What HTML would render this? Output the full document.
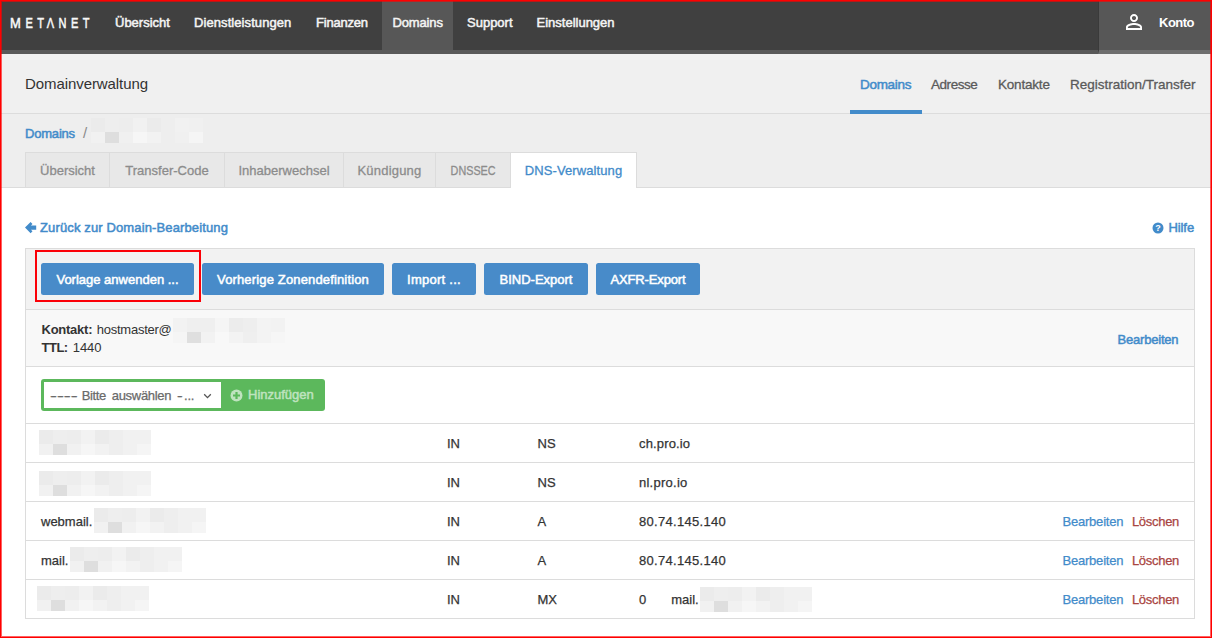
<!DOCTYPE html>
<html lang="de">
<head>
<meta charset="utf-8">
<title>Domainverwaltung - DNS-Verwaltung</title>
<style>
*{box-sizing:border-box;margin:0;padding:0}
html,body{width:1212px;height:638px;overflow:hidden;background:#fff}
body{position:relative;font-family:"Liberation Sans",Arial,sans-serif;font-size:13px;color:#333;line-height:16px}
a{text-decoration:none;color:#428bca}
.abs{position:absolute;white-space:nowrap}
.m{-webkit-text-stroke:0.5px currentColor}
/* screenshot frame */
#frame{position:absolute;left:0;top:0;width:1212px;height:638px;border:1px solid #ff0000;box-shadow:inset 0 0 0 1px rgba(255,0,0,.62);z-index:50;pointer-events:none}
/* top bar */
#topbar{position:absolute;left:0;top:0;width:1212px;height:54px;background:#404040;border-bottom:4px solid #595959}
#topbar a{position:absolute;top:0;height:50px;line-height:45px;color:#f4f4f4;white-space:nowrap}
#topbar a.active{background:#575757}
#topbar a#logo{left:10px;top:1px;font-size:14.5px;letter-spacing:5.9px;transform:scaleX(.76);transform-origin:0 50%;-webkit-text-stroke:0.5px #fff}
#account{position:absolute;left:1098px;top:0;width:114px;height:54px;background:#575757;border-bottom:4px solid #6e6e6e;border-left:1px solid #3a3a3a}
#account svg{position:absolute;left:23px;top:10px}
#account span{position:absolute;left:60px;top:15px;color:#fff;font-weight:bold;letter-spacing:-.5px}
/* sub header */
#subhead{position:absolute;left:0;top:54px;width:1212px;height:60px;background:#f0f0f0;border-bottom:1px solid #dcdcdc}
#subhead h1{position:absolute;left:25px;top:21px;font-size:15px;font-weight:normal;color:#333;line-height:18px;white-space:nowrap;letter-spacing:-.08px}
#subnav a{position:absolute;top:23px;font-size:13.5px;color:#5a5a5a;white-space:nowrap;-webkit-text-stroke:0.3px currentColor}
#subnav a.active{color:#428bca;-webkit-text-stroke:0.5px currentColor}
#subnav i{position:absolute;left:850px;top:56px;width:72px;height:4px;background:#428bca}
/* crumbs + tabs */
#crumbs{position:absolute;left:0;top:114px;width:1212px;height:74px;background:#eeeeee;border-bottom:1px solid #dcdcdc}
#crumbs .bc{position:absolute;left:25px;top:12px;white-space:nowrap}
#tabs{position:absolute;left:25px;top:38px;height:36px;list-style:none;display:flex;align-items:flex-start;border-left:1px solid #dcdcdc;border-top:1px solid #dcdcdc}
#tabs li{height:34px;line-height:36px;background:#e8e8e8;border-right:1px solid #dcdcdc;color:#8c8c8c;-webkit-text-stroke:0.3px currentColor;text-align:center;white-space:nowrap;overflow:hidden}
#tabs li.active{background:#fff;color:#428bca;position:relative;overflow:visible}
#tabs li.active::after{content:'';position:absolute;left:0;right:0;bottom:-1px;height:1px;background:#fff}
/* pixelated (redacted) areas */
.mz{position:absolute;z-index:6;display:grid;grid-template-columns:repeat(8,14px);grid-template-rows:14px 11px}
.mz b{display:block}
.mz b:nth-child(1){background:#ebebeb}.mz b:nth-child(2){background:#eee}.mz b:nth-child(3){background:#ededed}.mz b:nth-child(4){background:#f2f2f2}
.mz b:nth-child(5){background:#ebebeb}.mz b:nth-child(6){background:#eee}.mz b:nth-child(7){background:#f1f1f1}.mz b:nth-child(8){background:#f1f1f1}
.mz b:nth-child(9){background:#f1f1f1}.mz b:nth-child(10){background:#dedede}.mz b:nth-child(11){background:#f1f1f1}.mz b:nth-child(12){background:#f6f6f6}
.mz b:nth-child(13){background:#f2f2f2}.mz b:nth-child(14){background:#eee}.mz b:nth-child(15){background:#f1f1f1}.mz b:nth-child(16){background:#f5f5f5}
.mz.g b:nth-child(4){background:#f1f1f1}.mz.g b:nth-child(8){background:#f0f0f0}.mz.g b:nth-child(11){background:#f0f0f0}.mz.g b:nth-child(15){background:#f0f0f0}
.mz.f b:nth-child(1){background:#f2f2f2}.mz.f b:nth-child(2){background:#efefef}.mz.f b:nth-child(3){background:#efefef}.mz.f b:nth-child(4){background:#f5f5f5}
.mz.f b:nth-child(5){background:#ececec}.mz.f b:nth-child(7){background:#f3f3f3}.mz.f b:nth-child(8){background:#f2f2f2}
.mz.f b:nth-child(9){background:#f5f5f5}.mz.f b:nth-child(10){background:#dfdfdf}.mz.f b:nth-child(11){background:#f2f2f2}.mz.f b:nth-child(12){background:#f8f8f8}
.mz.f b:nth-child(13){background:#f3f3f3}.mz.f b:nth-child(14){background:#efefef}.mz.f b:nth-child(15){background:#f3f3f3}.mz.f b:nth-child(16){background:#f6f6f6}
/* content */
#back{left:40px;top:220px;letter-spacing:.13px}
#back svg{position:absolute;left:-15.2px;top:1.5px}
#help{left:1168.5px;top:220px;letter-spacing:-.1px}
#help svg{position:absolute;left:-16.2px;top:1.5px}
#panel{position:absolute;left:25px;top:248px;width:1170px;height:371px;border:1px solid #dcdcdc;background:#fff}
#toolbar{position:absolute;left:0;top:0;width:1168px;height:61px;background:#f2f2f2;border-bottom:1px solid #dcdcdc}
.btn{position:absolute;top:14px;height:32px;line-height:33px;background:#488bc9;color:#fff;border-radius:2.5px;text-align:center;white-space:nowrap}
#hl{position:absolute;left:35px;top:250px;width:166px;height:52px;border:2px solid #fb0007;z-index:5}
#meta{position:absolute;left:0;top:61px;width:1168px;height:57px;background:#f8f8f8;border-bottom:1px solid #dcdcdc}
#addrow{position:absolute;left:0;top:118px;width:1168px;height:57px;background:#fff;border-bottom:1px solid #dcdcdc}
#addgrp{position:absolute;left:15px;top:12px;width:284px;height:32px;background:#5cb85c;border-radius:3px}
#sel{position:absolute;left:3px;top:3px;width:177px;height:26px;background:#fff;color:#6a6a6a}
#sel svg{position:absolute;left:159px;top:11px}
#addbtn{left:207px;top:8px;color:#bfe3bf}
#addbtn svg{position:absolute;left:-18px;top:2px}
#records{position:absolute;left:0;top:175px;width:1168px;border-collapse:separate;border-spacing:0;table-layout:fixed}
#records td{height:39px;padding-top:2px;-webkit-text-stroke:0.25px currentColor;border-bottom:1px solid #dcdcdc;vertical-align:middle;white-space:nowrap;color:#333}
#records tr:last-child td{border-bottom:0;height:38px}
#records td.act{text-align:right;padding-right:15px}
.del{color:#a94442;margin-left:5px}
</style>
</head>
<body>
<div id="topbar">
  <a id="logo" href="#"><span style="display:inline-block;transform:scaleX(1.18);transform-origin:0 50%;margin-right:2.4px">M</span>E<span style="margin-right:-2.4px">T</span>&Lambda;NET</a>
  <a class="m" href="#" style="left:115px">Übersicht</a>
  <a class="m" href="#" style="left:194px;letter-spacing:.08px">Dienstleistungen</a>
  <a class="m" href="#" style="left:316px;letter-spacing:-.2px">Finanzen</a>
  <a class="m active" href="#" style="left:382px;width:71px;padding-left:10.5px;letter-spacing:-.15px">Domains</a>
  <a class="m" href="#" style="left:467px">Support</a>
  <a class="m" href="#" style="left:536.5px">Einstellungen</a>
</div>
<div id="account">
  <svg width="24" height="24" viewBox="0 0 24 24"><path fill="#fff" d="M12 5.9c1.16 0 2.1.94 2.1 2.1s-.94 2.1-2.1 2.1S9.900 9.160 9.900 8s.94-2.1 2.1-2.1m0 9c2.970 0 6.100 1.460 6.100 2.100v1.100H5.900V17c0-.64 3.130-2.100 6.100-2.100M12 4C9.790 4 8 5.790 8 8s1.790 4 4 4 4-1.790 4-4-1.790-4-4-4zm0 9c-2.670 0-8 1.340-8 4v3h16v-3c0-2.660-5.330-4-8-4z"/></svg>
  <span>Konto</span>
</div>

<div id="subhead">
  <h1>Domainverwaltung</h1>
  <nav id="subnav">
    <a class="active m" href="#" style="left:860px;letter-spacing:-.3px">Domains</a>
    <a href="#" style="left:931px;letter-spacing:-.45px">Adresse</a>
    <a href="#" style="left:998px;letter-spacing:-.2px">Kontakte</a>
    <a href="#" style="left:1070px">Registration/Transfer</a>
    <i></i>
  </nav>
</div>

<div id="crumbs">
  <div class="bc"><a class="m" href="#" style="letter-spacing:-.2px">Domains</a><span style="color:#8a8a8a;margin-left:8px;font-size:15px;line-height:0">/</span></div>
  <ul id="tabs">
    <li style="width:84px">Übersicht</li>
    <li style="width:115px">Transfer-Code</li>
    <li style="width:119px">Inhaberwechsel</li>
    <li style="width:92px;letter-spacing:.2px">Kündigung</li>
    <li style="width:75px"><span style="display:inline-block;transform:scaleX(.83)">DNSSEC</span></li>
    <li class="active m" style="width:126px;letter-spacing:.1px">DNS-Verwaltung</li>
  </ul>
</div>
<div class="mz g" style="left:91px;top:118px"><b></b><b></b><b></b><b></b><b></b><b></b><b></b><b></b><b></b><b></b><b></b><b></b><b></b><b></b><b></b><b></b></div>

<a id="back" class="abs m" href="#"><svg width="12" height="12" viewBox="0 0 12 12"><path fill="#428bca" d="M0 5.600 5.600 0 7.500 1.900 5.900 3.500H11.200V7.700H5.900L7.500 9.300 5.600 11.200Z"/></svg>Zurück zur Domain-Bearbeitung</a>
<a id="help" class="abs m" href="#"><svg width="12" height="12" viewBox="0 0 12 12"><circle cx="6" cy="6" r="5.500" fill="#428bca"/><text x="6" y="9.200" text-anchor="middle" font-family="Liberation Sans, sans-serif" font-size="9" font-weight="bold" fill="#fff">?</text></svg>Hilfe</a>

<div id="hl"></div>
<div id="panel">
  <div id="toolbar">
    <a class="btn m" href="#" style="left:15px;width:153px">Vorlage anwenden ...</a>
    <a class="btn m" href="#" style="left:176px;width:182px;letter-spacing:.15px">Vorherige Zonendefinition</a>
    <a class="btn m" href="#" style="left:366px;width:84px;letter-spacing:.25px">Import ...</a>
    <a class="btn m" href="#" style="left:458px;width:104px">BIND-Export</a>
    <a class="btn m" href="#" style="left:570px;width:104px;letter-spacing:-.15px">AXFR-Export</a>
  </div>
  <div id="meta">
    <div class="abs" style="left:15.5px;top:12px"><strong style="letter-spacing:-.25px;margin-right:4.5px">Kontakt:</strong><span style="letter-spacing:-.24px">hostmaster@</span></div>
    <div class="abs" style="left:15.5px;top:30px"><strong style="letter-spacing:-.5px;margin-right:5px">TTL:</strong><span>1440</span></div>
    <a class="abs m" href="#" style="left:1091.5px;top:22px;letter-spacing:-.2px">Bearbeiten</a>
  </div>
  <div id="addrow">
    <div id="addgrp">
      <div id="sel"><span class="abs" style="left:6px;top:6px;-webkit-text-stroke:.25px currentColor"><span style="display:inline-block;transform:scaleX(1.6);transform-origin:0 50%">----</span><span style="letter-spacing:-.4px;margin-left:14.4px">Bitte</span><span style="letter-spacing:-.3px;margin-left:6px">auswählen</span><span style="margin-left:5.5px;display:inline-block;transform:scaleX(1.3);transform-origin:0 50%">-</span><span style="margin-left:3px;letter-spacing:-.2px">...</span></span><svg width="9" height="7" viewBox="0 0 9 7"><path d="M1.2 1.300 4.500 4.600 7.800 1.300" fill="none" stroke="#555" stroke-width="1.300"/></svg></div>
      <span id="addbtn" class="abs m"><svg width="13" height="13" viewBox="0 0 13 13"><circle cx="6.500" cy="6.500" r="6" fill="#bfe3bf"/><path d="M6.500 3v7M3 6.500h7" stroke="#5cb85c" stroke-width="2.200"/></svg>Hinzufügen</span>
    </div>
  </div>
  <table id="records">
    <colgroup><col style="width:421px"><col style="width:90.5px"><col style="width:101.5px"><col><col style="width:140px"></colgroup>
    <tr><td></td><td>IN</td><td>NS</td><td style="letter-spacing:.15px">ch.pro.io</td><td></td></tr>
    <tr><td></td><td>IN</td><td>NS</td><td style="letter-spacing:.25px">nl.pro.io</td><td></td></tr>
    <tr><td style="padding-left:15px">webmail.</td><td>IN</td><td>A</td><td style="letter-spacing:.3px">80.74.145.140</td><td class="act"><a href="#" style="letter-spacing:-.2px">Bearbeiten</a> <a class="del" href="#" style="letter-spacing:-.3px">Löschen</a></td></tr>
    <tr><td style="padding-left:15px">mail.</td><td>IN</td><td>A</td><td style="letter-spacing:.3px">80.74.145.140</td><td class="act"><a href="#" style="letter-spacing:-.2px">Bearbeiten</a> <a class="del" href="#" style="letter-spacing:-.3px">Löschen</a></td></tr>
    <tr><td></td><td>IN</td><td>MX</td><td>0<span style="margin-left:25px">mail.</span></td><td class="act"><a href="#" style="letter-spacing:-.2px">Bearbeiten</a> <a class="del" href="#" style="letter-spacing:-.3px">Löschen</a></td></tr>
  </table>
</div>
<div class="mz f" style="left:173px;top:318px"><b></b><b></b><b></b><b></b><b></b><b></b><b></b><b></b><b></b><b></b><b></b><b></b><b></b><b></b><b></b><b></b></div>
<div class="mz" style="left:39px;top:430px"><b></b><b></b><b></b><b></b><b></b><b></b><b></b><b></b><b></b><b></b><b></b><b></b><b></b><b></b><b></b><b></b></div>
<div class="mz" style="left:39px;top:471px"><b></b><b></b><b></b><b></b><b></b><b></b><b></b><b></b><b></b><b></b><b></b><b></b><b></b><b></b><b></b><b></b></div>
<div class="mz" style="left:94px;top:508px"><b></b><b></b><b></b><b></b><b></b><b></b><b></b><b></b><b></b><b></b><b></b><b></b><b></b><b></b><b></b><b></b></div>
<div class="mz" style="left:70px;top:547px"><b></b><b></b><b></b><b></b><b></b><b></b><b></b><b></b><b></b><b></b><b></b><b></b><b></b><b></b><b></b><b></b></div>
<div class="mz" style="left:37px;top:586px"><b></b><b></b><b></b><b></b><b></b><b></b><b></b><b></b><b></b><b></b><b></b><b></b><b></b><b></b><b></b><b></b></div>
<div class="mz" style="left:700px;top:587px"><b></b><b></b><b></b><b></b><b></b><b></b><b></b><b></b><b></b><b></b><b></b><b></b><b></b><b></b><b></b><b></b></div>
<div id="frame"></div>
</body>
</html>
